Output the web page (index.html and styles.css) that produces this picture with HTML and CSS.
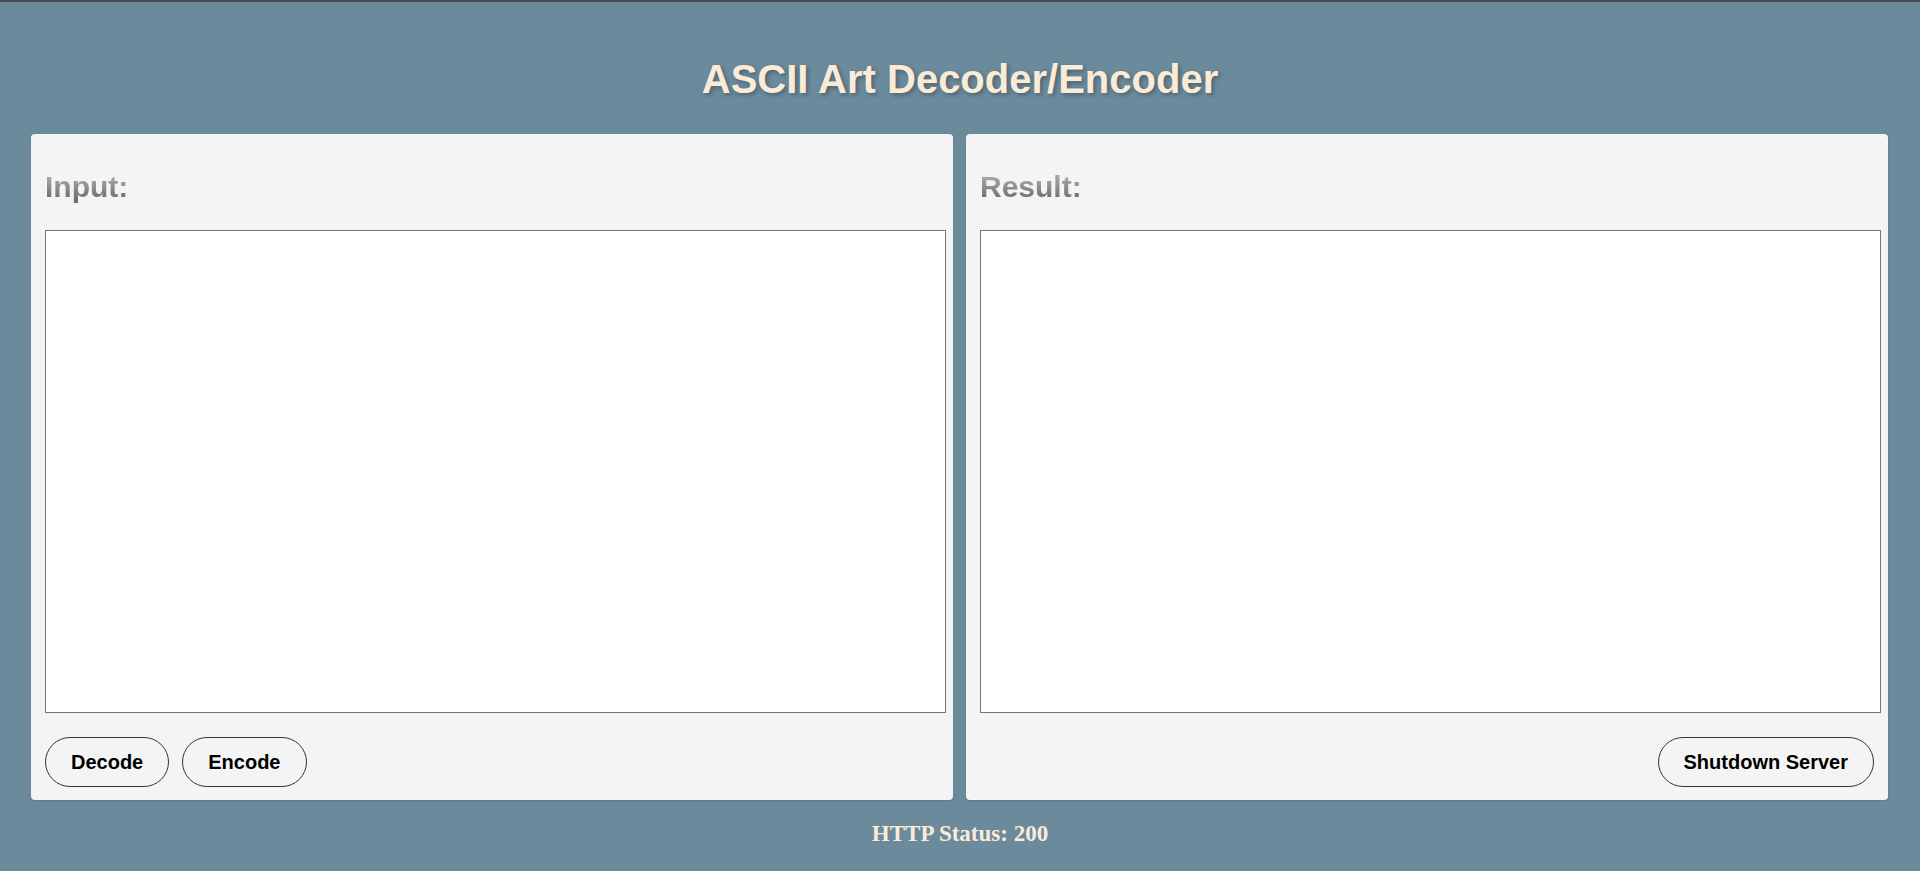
FILE: index.html
```html
<!DOCTYPE html>
<html lang="en">
<head>
<meta charset="utf-8">
<title>ASCII Art Decoder/Encoder</title>
<link rel="stylesheet" href="styles.css">
</head>
<body>
<h1 class="title">ASCII Art Decoder/Encoder</h1>
<main class="panels">
  <section class="panel">
    <h2 class="label">Input:</h2>
    <textarea class="box"></textarea>
    <div class="actions">
      <button class="btn">Decode</button>
      <button class="btn">Encode</button>
    </div>
  </section>
  <section class="panel">
    <h2 class="label">Result:</h2>
    <textarea class="box" readonly></textarea>
    <div class="actions actions-end">
      <button class="btn">Shutdown Server</button>
    </div>
  </section>
</main>
<p class="status">HTTP Status: 200</p>
</body>
</html>
```

FILE: styles.css
```css
html, body {
  margin: 0;
  padding: 0;
}
body {
  background: #6b8a9c;
  border-top: 2px solid #434b53;
  font-family: "Liberation Sans", Arial, sans-serif;
  min-height: 869px;
}
.title {
  margin: 54px 0 0;
  height: 46px;
  line-height: 46px;
  font-size: 40px;
  font-weight: bold;
  text-align: center;
  color: #faebd7;
  text-shadow: 2px 2px 4px rgba(0, 0, 0, 0.3);
}
.panels {
  display: flex;
  gap: 13px;
  margin-top: 32px;
  padding: 0 32px 0 31px;
}
.panel {
  flex: 1 1 0;
  min-width: 0;
  height: 666px;
  box-sizing: border-box;
  background: #f4f4f4;
  border-radius: 4px;
  padding: 0 7px 13px 14px;
  display: flex;
  flex-direction: column;
  box-shadow: 0 1px 2px rgba(0, 0, 0, 0.12);
}
.label {
  align-self: flex-start;
  margin: 36px 0 26px 0;
  height: 34px;
  line-height: 34px;
  font-size: 30px;
  font-weight: bold;
  color: #858585;
  background: linear-gradient(to bottom, #a4a4a4 25%, #6e6e6e 85%);
  -webkit-background-clip: text;
  background-clip: text;
  -webkit-text-fill-color: transparent;
}
.box {
  display: block;
  width: 100%;
  height: 483px;
  box-sizing: border-box;
  margin: 0;
  border: 1px solid #767676;
  background: #fff;
  resize: none;
  font-family: "Liberation Mono", monospace;
}
.actions {
  display: flex;
  gap: 13px;
  margin-top: 24px;
}
.actions-end {
  justify-content: flex-end;
  padding-right: 7px;
}
.btn {
  height: 50px;
  padding: 0 25px;
  border: 1px solid #333;
  border-radius: 25px;
  background: transparent;
  font-family: "Liberation Sans", Arial, sans-serif;
  font-size: 20px;
  font-weight: bold;
  color: #000;
  cursor: pointer;
}
.status {
  margin: 21px 0 0;
  height: 26px;
  line-height: 26px;
  text-align: center;
  font-family: "Liberation Serif", "Times New Roman", serif;
  font-size: 23px;
  font-weight: bold;
  color: #faebd7;
}
```
